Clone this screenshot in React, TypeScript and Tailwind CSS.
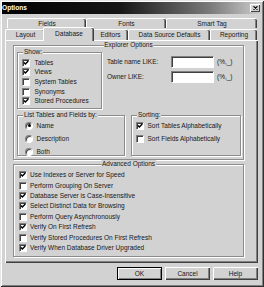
import React from "react";

function Check({ checked }: { checked?: boolean }) {
  return (
    <span className="flex h-[8px] w-[8px] shrink-0 items-center justify-center border border-t-[#808080] border-l-[#808080] border-b-white border-r-white bg-white shadow-[inset_1px_1px_0_#404040]">
      {checked && (
        <svg width="6" height="6" viewBox="0 0 6 6">
          <path d="M0.9 2.5 L2.4 4.1 L5.3 1.0" fill="none" stroke="#000" strokeWidth="1.4" />
        </svg>
      )}
    </span>
  );
}

function Radio({ on }: { on?: boolean }) {
  return (
    <span className="flex h-[8px] w-[8px] shrink-0 items-center justify-center rounded-full border border-t-[#808080] border-l-[#808080] border-b-white border-r-white bg-white shadow-[inset_1px_1px_0_#404040]">
      {on && <span className="h-[3px] w-[3px] rounded-full bg-black" />}
    </span>
  );
}

function Group({
  label,
  center,
  className,
  children,
}: {
  label: string;
  center?: boolean;
  className: string;
  children?: React.ReactNode;
}) {
  return (
    <div className={`relative border border-[#8c8c8c] shadow-[inset_1px_1px_0_#fff,1px_1px_0_#fff] ${className}`}>
      <span
        className={`absolute top-[-5px] bg-[#d2d2d2] px-[1px] leading-[8px] whitespace-nowrap ${
          center ? "left-1/2 -translate-x-1/2" : "left-[5px]"
        }`}
      >
        {label}
      </span>
      {children}
    </div>
  );
}

const tabBase =
  "flex items-center justify-center rounded-t-[2px] border-l border-t border-l-white border-t-white shadow-[inset_-1px_0_0_#404040,inset_-2px_0_0_#808080] whitespace-nowrap";

const advanced: [string, boolean][] = [
  ["Use Indexes or Server for Speed", true],
  ["Perform Grouping On Server", false],
  ["Database Server is Case-Insensitive", true],
  ["Select Distinct Data for Browsing", true],
  ["Perform Query Asynchronously", false],
  ["Verify On First Refresh", true],
  ["Verify Stored Procedures On First Refresh", false],
  ["Verify When Database Driver Upgraded", true],
];

const show: [string, boolean][] = [
  ["Tables", true],
  ["Views", true],
  ["System Tables", false],
  ["Synonyms", false],
  ["Stored Procedures", true],
];

export default function App() {
  return (
    <div className="flex h-[287px] w-[264px] flex-col overflow-hidden bg-[#d2d2d2] font-['Liberation_Sans',Arial,sans-serif] text-[6.5px] leading-[8px] text-[#161616] shadow-[inset_1px_1px_0_#e6e6e6,inset_-1px_-1px_0_#303030,inset_2px_2px_0_#fff,inset_-2px_-2px_0_#808080]">
      {/* title bar */}
      <div className="mx-[2px] mt-[2px] flex h-[12px] items-center justify-between bg-[linear-gradient(to_right,#000_0%,#161616_45%,#7a7a7a_80%,#cfcfcf_100%)] pr-[2px]">
        <span className="text-[6.6px] font-bold text-white">Options</span>
        <span className="flex h-[8px] w-[10px] items-center justify-center bg-[#d2d2d2] shadow-[inset_1px_1px_0_#fff,inset_-1px_-1px_0_#404040]">
          <svg width="5" height="4" viewBox="0 0 5 4">
            <path d="M0.5 0.3 L4.5 3.7 M4.5 0.3 L0.5 3.7" stroke="#000" strokeWidth="1.1" />
          </svg>
        </span>
      </div>

      {/* tabs back row */}
      <div className="ml-[7px] mt-[4px] flex h-[10px]">
        <div className={`${tabBase} w-[79px]`}>Fields</div>
        <div className={`${tabBase} w-[80px]`}>Fonts</div>
        <div className={`${tabBase} w-[91px]`}>Smart Tag</div>
      </div>
      {/* tabs front row */}
      <div className="ml-[5px] flex h-[12px] items-end">
        <div className={`${tabBase} h-[11px] w-[40px]`}>Layout</div>
        <div className={`${tabBase} relative z-10 -mx-[2px] mb-[-1px] h-[14px] w-[51px] bg-[#d2d2d2] pb-[1px]`}>Database</div>
        <div className={`${tabBase} h-[11px] w-[36px]`}>Editors</div>
        <div className={`${tabBase} h-[11px] w-[82px]`}>Data Source Defaults</div>
        <div className={`${tabBase} h-[11px] w-[47px]`}>Reporting</div>
      </div>

      {/* tab panel */}
      <div className="ml-[5px] flex h-[223px] w-[253px] flex-col shadow-[inset_1px_1px_0_#fff,inset_-1px_-1px_0_#404040,inset_-2px_-2px_0_#808080]">
        <Group label="Explorer Options" center className="ml-[8px] mt-[5px] h-[115px] w-[231px] pl-[3px] pt-[6px]">
          <div className="flex">
            <Group label="Show:" className="h-[57px] w-[85px] pl-[4px] pt-[5px]">
              {show.map(([t, c]) => (
                <div key={t} className="flex h-[9.6px] items-center gap-[4.5px] whitespace-nowrap">
                  <Check checked={c} />
                  <span>{t}</span>
                </div>
              ))}
            </Group>
            <div className="ml-[5px] mt-[4px] flex flex-col gap-[3px]">
              <div className="flex h-[12px] items-center">
                <span className="w-[64px]">Table name LIKE:</span>
                <span className="h-[12px] w-[43px] border border-t-[#808080] border-l-[#808080] border-b-white border-r-white bg-white shadow-[inset_1px_1px_0_#404040]" />
                <span className="ml-[3px]">(%,_)</span>
              </div>
              <div className="flex h-[12px] items-center">
                <span className="w-[64px]">Owner LIKE:</span>
                <span className="h-[12px] w-[43px] border border-t-[#808080] border-l-[#808080] border-b-white border-r-white bg-white shadow-[inset_1px_1px_0_#404040]" />
                <span className="ml-[3px]">(%,_)</span>
              </div>
            </div>
          </div>
          <div className="mt-[6px] flex gap-[6px]">
            <Group label="List Tables and Fields by:" className="h-[41px] w-[108px] pl-[7px] pt-[3px]">
              {["Name", "Description", "Both"].map((t, i) => (
                <div key={t} className="flex h-[13px] items-center gap-[3.5px]">
                  <Radio on={i === 0} />
                  <span>{t}</span>
                </div>
              ))}
            </Group>
            <Group label="Sorting:" className="h-[41px] w-[110px] pl-[4px] pt-[3px]">
              <div className="flex h-[13px] items-center gap-[3.5px]">
                <Check checked />
                <span>Sort Tables Alphabetically</span>
              </div>
              <div className="flex h-[13px] items-center gap-[3.5px]">
                <Check />
                <span>Sort Fields Alphabetically</span>
              </div>
            </Group>
          </div>
        </Group>

        <Group label="Advanced Options" center className="ml-[8px] mt-[4px] h-[93px] w-[231px] pl-[5px] pt-[5px]">
          {advanced.map(([t, c]) => (
            <div key={t} className="flex h-[10.43px] items-center gap-[3px] whitespace-nowrap">
              <Check checked={c} />
              <span>{t}</span>
            </div>
          ))}
        </Group>
      </div>

      {/* buttons */}
      <div className="mt-[4px] flex justify-end gap-[3px] pr-[6px]">
        <button className="flex h-[13px] w-[45px] items-center justify-center border border-black bg-[#d2d2d2] shadow-[inset_1px_1px_0_#fff,inset_-1px_-1px_0_#808080]">
          OK
        </button>
        <button className="flex h-[13px] w-[45px] items-center justify-center bg-[#d2d2d2] shadow-[inset_1px_1px_0_#fff,inset_-1px_-1px_0_#404040,inset_-2px_-2px_0_#808080]">
          Cancel
        </button>
        <button className="flex h-[13px] w-[45px] items-center justify-center bg-[#d2d2d2] shadow-[inset_1px_1px_0_#fff,inset_-1px_-1px_0_#404040,inset_-2px_-2px_0_#808080]">
          Help
        </button>
      </div>
    </div>
  );
}
